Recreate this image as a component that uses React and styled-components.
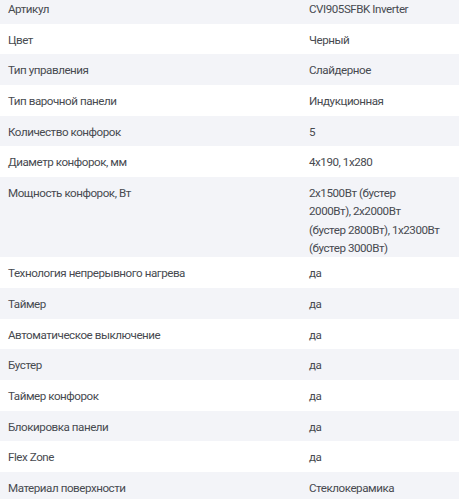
import React from 'react'
import styled, { createGlobalStyle } from 'styled-components'

const Global = createGlobalStyle`
body {
  margin: 0;
  background: #fff;
  font-family: Roboto, "Noto Sans", sans-serif;
}
`

const Table = styled.div`
display: flex;
flex-direction: column;
margin-top: -7px;
`

const Row = styled.div`
display: grid;
grid-template-columns: 301px 1fr;
align-items: start;
box-sizing: border-box;
min-height: 30.7px;
padding: 6px 4px 0 8px;
background: ${p => (p.$shade ? '#f3f4f8' : '#fff')};
font-size: 11.6px;
line-height: 18.3px;
letter-spacing: -0.45px;
color: #474a50;
font-feature-settings: "calt" 0;
`

const Label = styled.div`
padding-top: 1px;
`

const Value = styled.div`
padding-top: 1px;
`

const nb = '\u00a0'

const specs = [
  ['Артикул', 'CVI905SFBK Inverter'],
  ['Цвет', 'Черный'],
  ['Тип управления', 'Слайдерное'],
  ['Тип варочной панели', 'Индукционная'],
  ['Количество конфорок', '5'],
  ['Диаметр конфорок, мм', '4x190, 1x280'],
  ['Мощность конфорок, Вт', `2x1500Вт (бустер 2000Вт),${nb}2x2000Вт (бустер${nb}2800Вт), 1x2300Вт (бустер${nb}3000Вт)`],
  ['Технология непрерывного нагрева', 'да'],
  ['Таймер', 'да'],
  ['Автоматическое выключение', 'да'],
  ['Бустер', 'да'],
  ['Таймер конфорок', 'да'],
  ['Блокировка панели', 'да'],
  ['Flex Zone', 'да'],
  ['Материал поверхности', 'Стеклокерамика'],
]

export default function App() {
  return (
    <>
      <Global />
      <Table>
        {specs.map(([label, value], i) => (
          <Row key={label} $shade={i % 2 === 0}>
            <Label>{label}</Label>
            <Value>{value}</Value>
          </Row>
        ))}
      </Table>
    </>
  )
}
